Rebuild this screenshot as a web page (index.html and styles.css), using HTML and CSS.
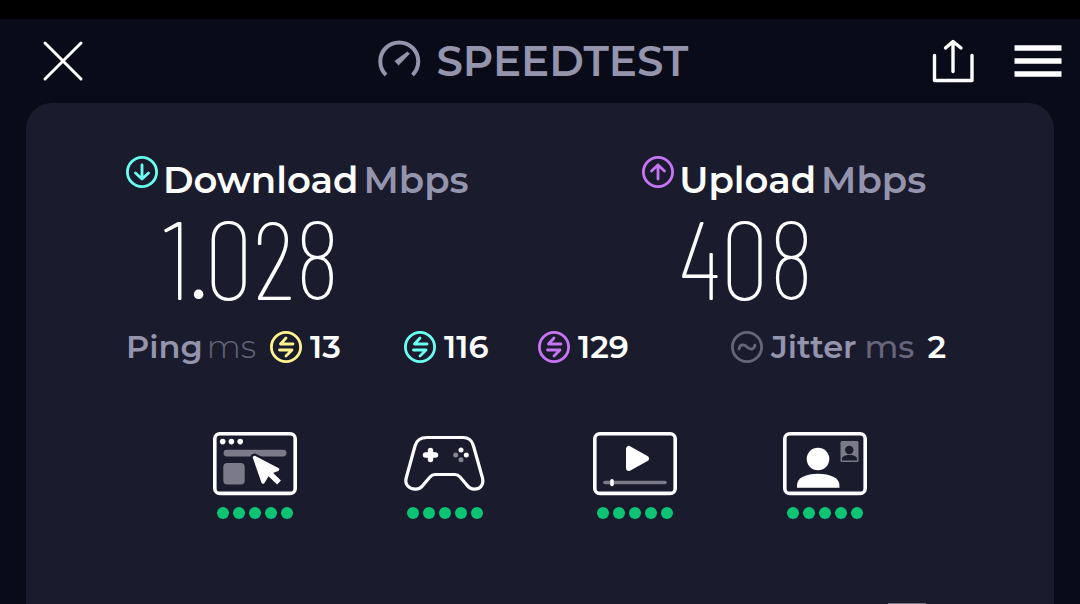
FILE: index.html
```html
<!DOCTYPE html>
<html lang="en">
<head>
    <meta charset="UTF-8">
    <meta name="viewport" content="width=device-width, initial-scale=1.0">
    <title>Speedtest</title>
    <link rel="stylesheet" href="styles.css">
</head>
<body>
    <div class="status-bar"></div>
    <header class="header">
        <button class="icon-button" type="button" aria-label="Close">
            <svg width="42" height="42" viewBox="0 0 42 42"><path d="M3 3l36 36M39 3L3 39" fill="none" stroke="#fff" stroke-width="3" stroke-linecap="round"/></svg>
        </button>
        <div class="brand">
            <svg width="44" height="42" viewBox="0 0 44 42">
                <path d="M8 35A19 19 0 1 1 34.500 35" fill="none" stroke="#9494ad" stroke-width="4"/>
                <path d="M29.500 11.500l2.300 2.300-11.300 11.700-4-4.500z" fill="#9494ad"/>
            </svg>
            <h1 class="brand-name">SPEEDTEST</h1>
        </div>
        <div class="actions">
            <button class="icon-button" type="button" aria-label="Share">
                <svg width="42" height="44" viewBox="0 0 42 44"><path d="M2.500 16.500v25h37.500V16.500M21 32.500V3M13.500 9l7.500-6.500 8 6.500" fill="none" stroke="#fff" stroke-width="3.400" stroke-linecap="round" stroke-linejoin="round"/></svg>
            </button>
            <button class="icon-button" type="button" aria-label="Menu">
                <svg width="48" height="44" viewBox="0 0 48 44"><path d="M.500 9H47.500M.500 22H47.500M.500 35H47.500" stroke="#fff" stroke-width="5.400"/></svg>
            </button>
        </div>
    </header>

    <main class="card">
        <section class="speeds">
            <div class="speed">
                <svg class="ring cyan" viewBox="0 0 32 32"><circle cx="16" cy="16" r="14.600"/><path d="M16 9v14M9.500 17l6.500 6 6.500-6"/></svg>
                <h2 class="speed-title">Download <span class="unit">Mbps</span></h2>
                <p class="speed-value">1.028</p>
            </div>
            <div class="speed">
                <svg class="ring purple" viewBox="0 0 32 32"><circle cx="16" cy="16" r="14.600"/><path d="M16 23V9M9.500 15L16 9l6.500 6"/></svg>
                <h2 class="speed-title">Upload <span class="unit">Mbps</span></h2>
                <p class="speed-value">408</p>
            </div>
        </section>

        <section class="latency">
            <div class="latency-label">Ping <span class="ms thin">ms</span></div>
            <div class="latency-item">
                <svg class="ring yellow" viewBox="0 0 32 32"><circle cx="16" cy="16" r="14.600"/><path d="M23 13H10.500l5.500-6M9.500 19H22l-6 6"/></svg>
                <b>13</b>
            </div>
            <div class="latency-item">
                <svg class="ring cyan" viewBox="0 0 32 32"><circle cx="16" cy="16" r="14.600"/><path d="M23 13H10.500l5.500-6M9.500 19H22l-6 6"/></svg>
                <b>116</b>
            </div>
            <div class="latency-item">
                <svg class="ring purple" viewBox="0 0 32 32"><circle cx="16" cy="16" r="14.600"/><path d="M23 13H10.500l5.500-6M9.500 19H22l-6 6"/></svg>
                <b>129</b>
            </div>
            <div class="jitter">
                <svg class="ring grey" viewBox="0 0 32 32"><circle cx="16" cy="16" r="14.600"/><path d="M8 18c1-5 5-5 8-2s7 3 8-2"/></svg>
                <span>Jitter</span> <span class="ms">ms</span> <b>2</b>
            </div>
        </section>

        <section class="quality">
            <!-- web browsing -->
            <div class="quality-item">
                <svg width="84" height="64" viewBox="0 0 84 64">
                    <rect x="1.800" y="1.800" width="80.400" height="59.600" rx="5" fill="none" stroke="#fff" stroke-width="3.600"/>
                    <g fill="#fff"><circle cx="9.700" cy="9.600" r="2.800"/><circle cx="18.400" cy="9.600" r="2.800"/><circle cx="27.200" cy="9.600" r="2.800"/></g>
                    <rect x="10.500" y="17.700" width="63" height="6.800" rx="3.400" fill="#7b7a88"/>
                    <rect x="10.300" y="31" width="21.400" height="21.500" rx="4" fill="#7b7a88"/>
                    <path d="M41.500 25.500L65 37.500l-9 4.500-6 8z" fill="#1b1b2e" stroke="#1b1b2e" stroke-width="8" stroke-linejoin="round"/>
                    <path d="M41.500 25.500L64.500 37.500l-9 3.500-5.500 9z" fill="#fff" stroke="#fff" stroke-width="3.400" stroke-linejoin="round"/>
                    <path d="M53 38l13 12.500" stroke="#fff" stroke-width="5.500"/>
                </svg>
                <div class="dots"><i></i><i></i><i></i><i></i><i></i></div>
            </div>
            <!-- gaming -->
            <div class="quality-item">
                <svg width="84" height="64" viewBox="0 0 84 64">
                    <path d="M24 5.500H60C66 5.500 69 8 70.500 14L79.500 46C81 53 77 57.200 71.500 57.200C68 57.200 65.500 55.500 63 52L57 45C55.500 43.200 54.500 42.500 52 42.500H32C29.500 42.500 28.500 43.200 27 45L21 52C18.500 55.500 16 57.200 12.500 57.200C6 57.200 1.500 52.500 3.200 46L12 14C13.500 8 18 5.500 24 5.500Z" fill="none" stroke="#fff" stroke-width="3.200"/>
                    <path d="M27.500 18.500v9M22.500 23h10" stroke="#fff" stroke-width="5.400" stroke-linecap="round"/>
                    <circle cx="58" cy="18" r="2.500" fill="#fff"/><circle cx="63.300" cy="23" r="2.500" fill="#fff"/>
                    <circle cx="52.700" cy="23" r="2.500" fill="#858490"/><circle cx="58" cy="27.800" r="2.500" fill="#858490"/>
                </svg>
                <div class="dots"><i></i><i></i><i></i><i></i><i></i></div>
            </div>
            <!-- video streaming -->
            <div class="quality-item">
                <svg width="84" height="64" viewBox="0 0 84 64">
                    <rect x="1.800" y="1.800" width="80.400" height="59.600" rx="5" fill="none" stroke="#fff" stroke-width="3.600"/>
                    <path d="M36 17v19l17-9.500z" fill="#fff" stroke="#fff" stroke-width="6" stroke-linejoin="round"/>
                    <path d="M12 50.500h60" stroke="#7b7a88" stroke-width="3.600" stroke-linecap="round"/>
                    <path d="M19 48.800v3.600" stroke="#fff" stroke-width="3.600" stroke-linecap="round"/>
                </svg>
                <div class="dots"><i></i><i></i><i></i><i></i><i></i></div>
            </div>
            <!-- video chat -->
            <div class="quality-item">
                <svg width="84" height="64" viewBox="0 0 84 64">
                    <rect x="1.800" y="1.800" width="80.400" height="59.600" rx="5" fill="none" stroke="#fff" stroke-width="3.600"/>
                    <circle cx="35" cy="27" r="11.300" fill="#fff"/>
                    <path d="M14 55.800V53c0-7 9-11.200 21-11.200S56.400 46 56.400 53v2.800z" fill="#fff"/>
                    <rect x="57.500" y="9" width="18" height="21" rx="1.500" fill="#7b7a88"/>
                    <circle cx="66.300" cy="18" r="4.200" fill="#1b1b2e"/>
                    <path d="M59 28.500V27c0-2.500 3-4 7.500-4s7.500 1.500 7.500 4v1.500z" fill="#1b1b2e"/>
                </svg>
                <div class="dots"><i></i><i></i><i></i><i></i><i></i></div>
            </div>
        </section>

        <div class="next-panel"></div>
    </main>
</body>
</html>
```
FILE: styles.css
```css
* {
    box-sizing: border-box;
}
body {
    margin: 0;
    height: 100vh;
    overflow: hidden;
    display: flex;
    flex-direction: column;
    background-color: #0a0b19;
    color: #fff;
    font-family: Montserrat, Inter, sans-serif;
}
h1, h2, p {
    margin: 0;
}
svg {
    display: block;
    flex-shrink: 0;
}
.status-bar {
    height: 19px;
    flex-shrink: 0;
    background-color: #000;
}

/* Header */
.header {
    height: 84px;
    flex-shrink: 0;
    padding: 0 18px 0 42px;
    display: grid;
    grid-template-columns: 9fr auto 10fr;
    align-items: center;
}
.icon-button {
    padding: 0;
    border: none;
    background: none;
    cursor: pointer;
    justify-self: start;
}
.brand {
    display: flex;
    align-items: center;
    gap: 14px;
    color: #9494ad;
}
.brand-name {
    font-size: 42px;
    line-height: 48px;
    font-weight: 600;
}
.actions {
    display: flex;
    justify-content: flex-end;
    gap: 40px;
}

/* Results */
.card {
    flex: 1;
    margin: 0 26px;
    padding: 53px 108px 0 100px;
    display: flex;
    flex-direction: column;
    background-color: #1b1b2e;
    border-radius: 26px 26px 0 0;
}
.speeds {
    display: grid;
    grid-template-columns: 17fr 10fr;
}
.speed {
    display: grid;
    grid-template-columns: 32px auto;
    column-gap: 5px;
    justify-content: start;
}
.speed-title {
    display: flex;
    gap: 5px;
    font-size: 37px;
    line-height: 48px;
    font-weight: 600;
    white-space: nowrap;
}
.unit {
    color: #9494ad;
}
.speed-value {
    grid-column: 2;
    font-family: "Barlow Condensed", "Roboto Condensed", Roboto, sans-serif;
    font-size: 110px;
    line-height: 104px;
    font-weight: 200;
}

.ring {
    width: 32px;
    height: 32px;
    fill: none;
    stroke: currentColor;
    stroke-width: 2.8;
    stroke-linecap: round;
    stroke-linejoin: round;
}
.cyan { color: #6afff3; }
.purple { color: #c875f5; }
.yellow { color: #fff38e; }
.grey { color: #66657a; }

.latency {
    display: flex;
    align-items: center;
    margin-top: 23px;
    font-size: 32px;
    line-height: 32px;
    font-weight: 600;
    white-space: nowrap;
}
.latency-label {
    display: flex;
    gap: 4px;
    width: 144px;
    color: #9494ad;
}
.latency-item {
    width: 134px;
    display: flex;
    gap: 8px;
}
.latency b {
    color: #fff;
    font-weight: 600;
}
.ms {
    color: #66657a;
    font-weight: 500;
}
.thin {
    font-weight: 300;
}
.jitter {
    display: flex;
    gap: 8px;
    margin-left: auto;
    color: #9494ad;
}
.jitter b {
    margin-left: 5px;
}

.quality {
    display: flex;
    justify-content: center;
    gap: 106px;
    margin: 69px 0 0 8px;
}
.quality-item {
    display: flex;
    flex-direction: column;
    align-items: center;
    gap: 11px;
}
.dots {
    display: flex;
    gap: 4px;
}
.dots i {
    width: 12px;
    height: 12px;
    border-radius: 50%;
    background-color: #0cc474;
}

/* Top edge of the panel below */
.next-panel {
    width: 38px;
    height: 1px;
    margin: auto 20px 0 auto;
    background-color: #777687;
}
```
